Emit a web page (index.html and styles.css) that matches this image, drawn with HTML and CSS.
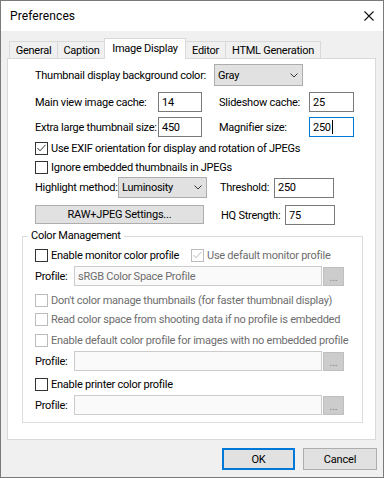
FILE: index.html
```html
<!DOCTYPE html>
<html lang="en">
<head>
    <meta charset="UTF-8">
    <meta name="viewport" content="width=device-width, initial-scale=1.0">
    <title>Preferences</title>
    <link rel="stylesheet" href="styles.css">
</head>
<body>
    <div class="window">
        <div class="titlebar">
            <span class="title">Preferences</span>
            <svg class="close" width="10" height="10" viewBox="0 0 10 10">
                <path d="M0.5 0.5 L9.5 9.5 M9.5 0.5 L0.5 9.5" stroke="#111" stroke-width="1.1" fill="none"/>
            </svg>
        </div>

        <div class="tabs">
            <div class="tab tab-general">General</div>
            <div class="tab tab-caption">Caption</div>
            <div class="tab tab-image active">Image Display</div>
            <div class="tab tab-editor">Editor</div>
            <div class="tab tab-html">HTML Generation</div>
        </div>

        <div class="panel">
            <div class="top">
                <div class="row row-select">
                    <span class="lbl w-bgcolor">Thumbnail display background color:</span>
                    <div class="select sel-gray">
                        <span>Gray</span>
                        <svg class="chev" width="8" height="5" viewBox="0 0 8 5"><path d="M0.5 0.5 L4 4 L7.5 0.5" stroke="#333" fill="none"/></svg>
                    </div>
                </div>

                <div class="row row-field mt6">
                    <span class="lbl w-cache">Main view image cache:</span>
                    <div class="field w-small">14</div>
                    <span class="lbl w-right1">Slideshow cache:</span>
                    <div class="field w-small2">25</div>
                </div>

                <div class="row row-field mt5">
                    <span class="lbl w-cache">Extra large thumbnail size:</span>
                    <div class="field w-small">450</div>
                    <span class="lbl w-right1">Magnifier size:</span>
                    <div class="field w-small2 focus">250<span class="caret"></span></div>
                </div>

                <div class="row row-check mt4">
                    <span class="cb"><svg width="11" height="11" viewBox="0 0 11 11"><path d="M1.5 5 L4 7.8 L9.5 1.8" stroke="#333" fill="none"/></svg></span>
                    <span>Use EXIF orientation for display and rotation of JPEGs</span>
                </div>

                <div class="row row-check mt4">
                    <span class="cb"></span>
                    <span>Ignore embedded thumbnails in JPEGs</span>
                </div>

                <div class="row row-high mt2">
                    <span class="lbl w-high">Highlight method:</span>
                    <div class="select sel-lum">
                        <span>Luminosity</span>
                        <svg class="chev" width="8" height="5" viewBox="0 0 8 5"><path d="M0.5 0.5 L4 4 L7.5 0.5" stroke="#333" fill="none"/></svg>
                    </div>
                    <span class="lbl w-thresh">Threshold:</span>
                    <div class="field w-thresh-field">250</div>
                </div>

                <div class="row row-field mt7">
                    <button class="btn btn-raw">RAW+JPEG Settings...</button>
                    <span class="lbl w-hq">HQ Strength:</span>
                    <div class="field w-hq-field">75</div>
                </div>
            </div>

            <fieldset class="group">
                <legend>Color Management</legend>
                <div class="group-body">
                    <div class="row row-check mt5">
                        <div class="check-item w-monitor">
                            <span class="cb"></span>
                            <span>Enable monitor color profile</span>
                        </div>
                        <div class="check-item disabled">
                            <span class="cb"><svg width="11" height="11" viewBox="0 0 11 11"><path d="M1.5 5 L4 7.8 L9.5 1.8" stroke="#bcbcbc" fill="none"/></svg></span>
                            <span>Use default monitor profile</span>
                        </div>
                    </div>

                    <div class="row row-field mt3">
                        <span class="lbl w-profile">Profile:</span>
                        <div class="field profile-field disabled-field">sRGB Color Space Profile</div>
                        <div class="browse">...</div>
                    </div>

                    <div class="row row-check mt7 disabled">
                        <span class="cb"></span>
                        <span>Don't color manage thumbnails (for faster thumbnail display)</span>
                    </div>

                    <div class="row row-check mt4 disabled">
                        <span class="cb"></span>
                        <span>Read color space from shooting data if no profile is embedded</span>
                    </div>

                    <div class="row row-check mt6 disabled">
                        <span class="cb"></span>
                        <span>Enable default color profile for images with no embedded profile</span>
                    </div>

                    <div class="row row-field mt3">
                        <span class="lbl w-profile">Profile:</span>
                        <div class="field profile-field disabled-field"></div>
                        <div class="browse">...</div>
                    </div>

                    <div class="row row-check mt6">
                        <span class="cb"></span>
                        <span>Enable printer color profile</span>
                    </div>

                    <div class="row row-field mt3">
                        <span class="lbl w-profile">Profile:</span>
                        <div class="field profile-field disabled-field"></div>
                        <div class="browse">...</div>
                    </div>
                </div>
            </fieldset>
        </div>

        <div class="footer">
            <button class="btn btn-ok">OK</button>
            <button class="btn btn-cancel">Cancel</button>
        </div>
    </div>
</body>
</html>
```

FILE: styles.css
```css
body {
    margin: 0;
    font-family: Roboto, "Liberation Sans", sans-serif;
    font-size: 11px;
    letter-spacing: -0.25px;
    color: #000;
    background: #f0f0f0;
    white-space: nowrap;
}

.window {
    width: 384px;
    height: 478px;
    box-sizing: border-box;
    border: 1px solid #7a7a7a;
    background: #f0f0f0;
    display: flex;
    flex-direction: column;
}

/* title bar */
.titlebar {
    height: 30px;
    background: #fff;
    display: flex;
    align-items: center;
    justify-content: space-between;
    padding: 0 9px 0 9px;
}

.title {
    font-size: 12px;
    letter-spacing: 0.1px;
}

/* tabs */
.tabs {
    display: flex;
    align-items: flex-end;
    height: 20px;
    margin-top: 7px;
    padding-left: 8px;
}

.tab {
    height: 17px;
    box-sizing: border-box;
    border: 1px solid #d9d9d9;
    border-bottom: none;
    background: #f0f0f0;
    display: flex;
    align-items: center;
    justify-content: center;
    margin-left: -1px;
}

.tab-general { width: 49px; margin-left: 0; }
.tab-caption { width: 49px; }
.tab-image { width: 82px; }
.tab-editor { width: 41px; }
.tab-html { width: 96px; }

.tab.active {
    height: 21px;
    margin-left: -2px;
    margin-bottom: -1px;
    padding-bottom: 2px;
    background: #fff;
    position: relative;
    z-index: 1;
}

/* main panel */
.panel {
    height: 382px;
    box-sizing: border-box;
    margin: 0 7px 0 6px;
    border: 1px solid #d9d9d9;
    background: #fff;
    padding-top: 5px;
}

.top {
    padding-left: 27px;
}

.row {
    display: flex;
    align-items: center;
}

.row-select { height: 22px; }
.row-field { height: 20px; }
.row-check { height: 15px; }
.row-high { height: 21px; }

.mt2 { margin-top: 2px; }
.mt3 { margin-top: 3px; }
.mt4 { margin-top: 4px; }
.mt5 { margin-top: 5px; }
.mt6 { margin-top: 6px; }
.mt7 { margin-top: 7px; }

.lbl {
    flex-shrink: 0;
}

.w-bgcolor { width: 179px; }
.w-cache { width: 123px; }
.w-right1 { width: 90px; margin-left: 17px; }
.w-high { width: 83px; }
.w-thresh { width: 54px; margin-left: 13px; }
.w-hq { width: 64px; margin-left: 17px; }
.w-profile { width: 39px; }

/* dropdowns */
.select {
    box-sizing: border-box;
    height: 22px;
    border: 1px solid #adadad;
    background: #e1e1e1;
    display: flex;
    align-items: center;
    justify-content: space-between;
    padding: 0 4px 0 3px;
}

.sel-gray { width: 89px; }
.sel-lum { width: 89px; height: 21px; }

/* text boxes */
.field {
    box-sizing: border-box;
    height: 20px;
    border: 1px solid #7a7a7a;
    background: #fff;
    padding: 0 3px;
    display: flex;
    align-items: center;
    overflow: hidden;
}

.field.focus {
    border-color: #0078d7;
}

.caret {
    width: 1px;
    height: 14px;
    background: #000;
    margin-left: 1px;
}

.w-small { width: 44px; }
.w-small2 { width: 45px; }
.w-thresh-field { width: 60px; }
.w-hq-field { width: 50px; }

.profile-field {
    width: 248px;
    color: #6d6d6d;
}

.disabled-field {
    border-color: #cccccc;
    background: #fafafa;
}

.browse {
    box-sizing: border-box;
    width: 21px;
    height: 19px;
    margin-left: 1px;
    border: 1px solid #bfbfbf;
    background: #cccccc;
    color: #838383;
    display: flex;
    align-items: center;
    justify-content: center;
    line-height: 1;
    padding-top: 2px;
}

/* checkboxes */
.cb {
    width: 13px;
    height: 13px;
    box-sizing: border-box;
    border: 1px solid #333;
    background: #fff;
    margin-right: 3px;
    flex-shrink: 0;
    display: flex;
}

.check-item {
    display: flex;
    align-items: center;
}

.w-monitor { width: 156px; }

.disabled {
    color: #6d6d6d;
}

.disabled .cb {
    border-color: #bcbcbc;
}

/* buttons */
.btn {
    box-sizing: border-box;
    border: 1px solid #adadad;
    background: #e1e1e1;
    font-family: inherit;
    font-size: 11px;
    letter-spacing: -0.2px;
    color: #000;
    padding: 0;
}

.btn-raw {
    width: 169px;
    height: 19px;
    align-self: flex-start;
}

/* color management group */
.group {
    margin: 4px 12px 0 14px;
    padding: 0 0 7px 0;
    border: 1px solid #dcdcdc;
    min-width: 0;
}

.group legend {
    margin-left: 5px;
    padding: 0 3px;
    line-height: 14px;
}

.group-body {
    padding-left: 12px;
}

/* dialog buttons */
.footer {
    display: flex;
    justify-content: flex-end;
    gap: 8px;
    margin-top: 8px;
    padding-right: 6px;
}

.btn-ok {
    width: 73px;
    height: 22px;
    border: 2px solid #0078d7;
}

.btn-cancel {
    width: 74px;
    height: 22px;
}
```
